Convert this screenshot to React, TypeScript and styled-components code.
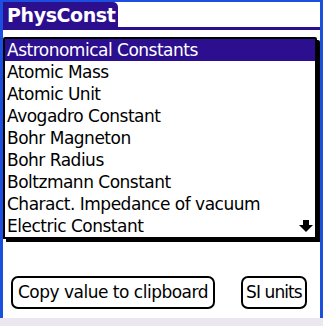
import * as React from 'react';
import styled, { createGlobalStyle } from 'styled-components';

const GlobalStyle = createGlobalStyle`
    html, body {
        margin: 0;
        padding: 0;
        background: #ffffff;
    }
    body {
        font-family: 'DejaVu Sans', 'Liberation Sans', sans-serif;
    }
`;

const PURPLE = '#2c0f8e';

const Screen = styled.div`
    width: 323px;
    height: 326px;
    display: flex;
    flex-direction: column;
    overflow: hidden;
`;

const Frame = styled.div`
    height: 318px;
    box-sizing: border-box;
    padding: 2px 3px 0 3px;
    background: #1a4fe0;
    display: flex;
`;

const BottomStrip = styled.div`
    height: 8px;
    background: #ece6ee;
`;

const Form = styled.div`
    flex: 1;
    background: #ffffff;
    display: flex;
    flex-direction: column;
`;

const TitleBar = styled.div`
    height: 25px;
    border-bottom: 3px solid ${PURPLE};
    display: flex;
`;

const TitleTab = styled.div`
    width: 115px;
    background: ${PURPLE};
    color: #ffffff;
    font-weight: bold;
    font-size: 19px;
    line-height: 26px;
    padding-left: 4px;
    box-sizing: border-box;
    border-top-right-radius: 5px;
    letter-spacing: -0.4px;
`;

const List = styled.div`
    position: relative;
    margin: 7px 0 0 0;
    width: 314px;
    box-sizing: border-box;
    border: 2px solid #000000;
    border-radius: 2px 2px 0 0;
    box-shadow: 3px 3px 0 #000000;
`;

const Row = styled.div<{ selected?: boolean }>`
    height: 22px;
    line-height: 22px;
    padding-left: 2px;
    font-size: 17px;
    letter-spacing: -0.5px;
    white-space: nowrap;
    color: ${({ selected }) => (selected ? '#ffffff' : '#000000')};
    background: ${({ selected }) => (selected ? PURPLE : 'transparent')};
`;

const ScrollArrow = styled.svg`
    position: absolute;
    right: 2px;
    bottom: 5px;
`;

const ButtonRow = styled.div`
    display: flex;
    align-items: center;
    gap: 26px;
    margin: 37px 0 0 8px;
`;

const Button = styled.div<{ tight?: boolean }>`
    height: 33px;
    box-sizing: border-box;
    border: 2px solid #000000;
    border-radius: 7px;
    padding: 0 ${({ tight }) => (tight ? 3 : 5)}px;
    font-size: 17px;
    letter-spacing: ${({ tight }) => (tight ? -0.9 : -0.5)}px;
    line-height: 29px;
    color: #000000;
    white-space: nowrap;
`;

const items = [
    'Astronomical Constants',
    'Atomic Mass',
    'Atomic Unit',
    'Avogadro Constant',
    'Bohr Magneton',
    'Bohr Radius',
    'Boltzmann Constant',
    'Charact. Impedance of vacuum',
    'Electric Constant',
];

export default function App() {
    return (
        <Screen>
            <GlobalStyle />
            <Frame>
                <Form>
                    <TitleBar>
                        <TitleTab>PhysConst</TitleTab>
                    </TitleBar>
                    <List>
                        {items.map((name, i) => (
                            <Row key={name} selected={i === 0}>
                                {name}
                            </Row>
                        ))}
                        <ScrollArrow width="14" height="12" viewBox="0 0 14 12">
                            <rect x="4" y="0" width="6" height="6" fill="#000" />
                            <polygon points="0,5 14,5 7,12" fill="#000" />
                        </ScrollArrow>
                    </List>
                    <ButtonRow>
                        <Button>Copy value to clipboard</Button>
                        <Button tight>SI units</Button>
                    </ButtonRow>
                </Form>
            </Frame>
            <BottomStrip />
        </Screen>
    );
}
